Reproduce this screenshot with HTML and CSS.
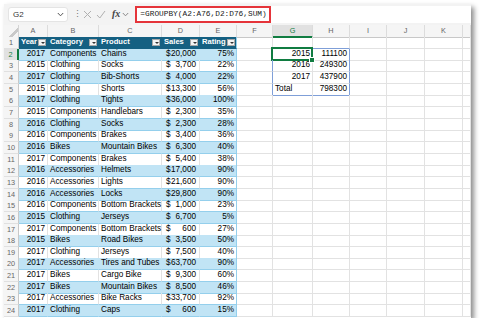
FILE: index.html
```html
<!DOCTYPE html>
<html>
<head>
<meta charset="utf-8">
<link rel="stylesheet" href="styles.css">
</head>
<body>
<div class="window">
  <div class="fbar">
    <div class="namebox"><span class="nb-text">G2</span><svg class="chev" width="7" height="5" viewBox="0 0 7 5"><path d="M0.8 1 L3.5 3.8 L6.2 1" fill="none" stroke="#555" stroke-width="1"/></svg></div>
    <span class="dots">⋮</span>
    <svg class="ico" width="9" height="9" viewBox="0 0 9 9"><path d="M1 1 L8 8 M8 1 L1 8" stroke="#b0b0b0" stroke-width="1"/></svg>
    <svg class="ico" width="10" height="9" viewBox="0 0 10 9"><path d="M1 5 L3.8 8 L9 1" fill="none" stroke="#b0b0b0" stroke-width="1"/></svg>
    <span class="fx">fx</span>
    <svg class="chev2" width="7" height="5" viewBox="0 0 7 5"><path d="M0.8 1 L3.5 3.8 L6.2 1" fill="none" stroke="#888" stroke-width="1"/></svg>
    <div class="finput"><span class="formula">=GROUPBY(A2:A76,D2:D76,SUM)</span></div>
  </div>
  <div class="sheet">
    <div class="r hdr"><div class="corner"></div><div class="ch">A</div><div class="ch">B</div><div class="ch">C</div><div class="ch">D</div><div class="ch">E</div><div class="ch">F</div><div class="ch csel">G</div><div class="ch">H</div><div class="ch">I</div><div class="ch">J</div><div class="ch">K</div><div class="ch"></div></div>

    <div class="r"><div class="h">1</div><div class="c th"><span>Year</span><i class="dd"></i></div><div class="c th"><span>Category</span><i class="dd"></i></div><div class="c th"><span>Product</span><i class="dd"></i></div><div class="c th"><span>Sales</span><i class="dd"></i></div><div class="c th te"><span>Rating</span><i class="dd"></i></div><div class="c"></div><div class="c spb"></div><div class="c spb"></div><div class="c"></div><div class="c"></div><div class="c"></div><div class="c"></div></div>

    <div class="r"><div class="h rsel">2</div><div class="c t b n">2017</div><div class="c t b">Components</div><div class="c t b">Chains</div><div class="c t b acct"><span>$</span><span>20,000</span></div><div class="c t b n te">75%</div><div class="c spr"></div><div class="c n sel">2015</div><div class="c n spr">111100</div><div class="c"></div><div class="c"></div><div class="c"></div><div class="c"></div></div>

    <div class="r"><div class="h">3</div><div class="c t n">2015</div><div class="c t">Clothing</div><div class="c t">Socks</div><div class="c t acct"><span>$</span><span>3,700</span></div><div class="c t n te">22%</div><div class="c spr"></div><div class="c n">2016</div><div class="c n spr">249300</div><div class="c"></div><div class="c"></div><div class="c"></div><div class="c"></div></div>

    <div class="r"><div class="h">4</div><div class="c t b n">2017</div><div class="c t b">Clothing</div><div class="c t b">Bib-Shorts</div><div class="c t b acct"><span>$</span><span>4,000</span></div><div class="c t b n te">22%</div><div class="c spr"></div><div class="c n">2017</div><div class="c n spr">437900</div><div class="c"></div><div class="c"></div><div class="c"></div><div class="c"></div></div>

    <div class="r"><div class="h">5</div><div class="c t n">2015</div><div class="c t">Clothing</div><div class="c t">Shorts</div><div class="c t acct"><span>$</span><span>13,300</span></div><div class="c t n te">56%</div><div class="c spr"></div><div class="c spb">Total</div><div class="c n spr spb">798300</div><div class="c"></div><div class="c"></div><div class="c"></div><div class="c"></div></div>

    <div class="r"><div class="h">6</div><div class="c t b n">2017</div><div class="c t b">Clothing</div><div class="c t b">Tights</div><div class="c t b acct"><span>$</span><span>36,000</span></div><div class="c t b n te">100%</div><div class="c"></div><div class="c"></div><div class="c"></div><div class="c"></div><div class="c"></div><div class="c"></div><div class="c"></div></div>

    <div class="r"><div class="h">7</div><div class="c t n">2015</div><div class="c t">Components</div><div class="c t">Handlebars</div><div class="c t acct"><span>$</span><span>2,300</span></div><div class="c t n te">35%</div><div class="c"></div><div class="c"></div><div class="c"></div><div class="c"></div><div class="c"></div><div class="c"></div><div class="c"></div></div>

    <div class="r"><div class="h">8</div><div class="c t b n">2016</div><div class="c t b">Clothing</div><div class="c t b">Socks</div><div class="c t b acct"><span>$</span><span>2,300</span></div><div class="c t b n te">28%</div><div class="c"></div><div class="c"></div><div class="c"></div><div class="c"></div><div class="c"></div><div class="c"></div><div class="c"></div></div>

    <div class="r"><div class="h">9</div><div class="c t n">2016</div><div class="c t">Components</div><div class="c t">Brakes</div><div class="c t acct"><span>$</span><span>3,400</span></div><div class="c t n te">36%</div><div class="c"></div><div class="c"></div><div class="c"></div><div class="c"></div><div class="c"></div><div class="c"></div><div class="c"></div></div>

    <div class="r"><div class="h">10</div><div class="c t b n">2016</div><div class="c t b">Bikes</div><div class="c t b">Mountain Bikes</div><div class="c t b acct"><span>$</span><span>6,300</span></div><div class="c t b n te">40%</div><div class="c"></div><div class="c"></div><div class="c"></div><div class="c"></div><div class="c"></div><div class="c"></div><div class="c"></div></div>

    <div class="r"><div class="h">11</div><div class="c t n">2017</div><div class="c t">Components</div><div class="c t">Brakes</div><div class="c t acct"><span>$</span><span>5,400</span></div><div class="c t n te">38%</div><div class="c"></div><div class="c"></div><div class="c"></div><div class="c"></div><div class="c"></div><div class="c"></div><div class="c"></div></div>

    <div class="r"><div class="h">12</div><div class="c t b n">2016</div><div class="c t b">Accessories</div><div class="c t b">Helmets</div><div class="c t b acct"><span>$</span><span>17,000</span></div><div class="c t b n te">90%</div><div class="c"></div><div class="c"></div><div class="c"></div><div class="c"></div><div class="c"></div><div class="c"></div><div class="c"></div></div>

    <div class="r"><div class="h">13</div><div class="c t n">2016</div><div class="c t">Accessories</div><div class="c t">Lights</div><div class="c t acct"><span>$</span><span>21,600</span></div><div class="c t n te">90%</div><div class="c"></div><div class="c"></div><div class="c"></div><div class="c"></div><div class="c"></div><div class="c"></div><div class="c"></div></div>

    <div class="r"><div class="h">14</div><div class="c t b n">2016</div><div class="c t b">Accessories</div><div class="c t b">Locks</div><div class="c t b acct"><span>$</span><span>29,800</span></div><div class="c t b n te">90%</div><div class="c"></div><div class="c"></div><div class="c"></div><div class="c"></div><div class="c"></div><div class="c"></div><div class="c"></div></div>

    <div class="r"><div class="h">15</div><div class="c t n">2016</div><div class="c t">Components</div><div class="c t">Bottom Brackets</div><div class="c t acct"><span>$</span><span>1,000</span></div><div class="c t n te">23%</div><div class="c"></div><div class="c"></div><div class="c"></div><div class="c"></div><div class="c"></div><div class="c"></div><div class="c"></div></div>

    <div class="r"><div class="h">16</div><div class="c t b n">2015</div><div class="c t b">Clothing</div><div class="c t b">Jerseys</div><div class="c t b acct"><span>$</span><span>6,700</span></div><div class="c t b n te">5%</div><div class="c"></div><div class="c"></div><div class="c"></div><div class="c"></div><div class="c"></div><div class="c"></div><div class="c"></div></div>

    <div class="r"><div class="h">17</div><div class="c t n">2017</div><div class="c t">Components</div><div class="c t">Bottom Brackets</div><div class="c t acct"><span>$</span><span>600</span></div><div class="c t n te">27%</div><div class="c"></div><div class="c"></div><div class="c"></div><div class="c"></div><div class="c"></div><div class="c"></div><div class="c"></div></div>

    <div class="r"><div class="h">18</div><div class="c t b n">2015</div><div class="c t b">Bikes</div><div class="c t b">Road Bikes</div><div class="c t b acct"><span>$</span><span>3,500</span></div><div class="c t b n te">50%</div><div class="c"></div><div class="c"></div><div class="c"></div><div class="c"></div><div class="c"></div><div class="c"></div><div class="c"></div></div>

    <div class="r"><div class="h">19</div><div class="c t n">2017</div><div class="c t">Clothing</div><div class="c t">Jerseys</div><div class="c t acct"><span>$</span><span>7,500</span></div><div class="c t n te">40%</div><div class="c"></div><div class="c"></div><div class="c"></div><div class="c"></div><div class="c"></div><div class="c"></div><div class="c"></div></div>

    <div class="r"><div class="h">20</div><div class="c t b n">2017</div><div class="c t b">Accessories</div><div class="c t b">Tires and Tubes</div><div class="c t b acct"><span>$</span><span>63,700</span></div><div class="c t b n te">90%</div><div class="c"></div><div class="c"></div><div class="c"></div><div class="c"></div><div class="c"></div><div class="c"></div><div class="c"></div></div>

    <div class="r"><div class="h">21</div><div class="c t n">2017</div><div class="c t">Bikes</div><div class="c t">Cargo Bike</div><div class="c t acct"><span>$</span><span>9,300</span></div><div class="c t n te">60%</div><div class="c"></div><div class="c"></div><div class="c"></div><div class="c"></div><div class="c"></div><div class="c"></div><div class="c"></div></div>

    <div class="r"><div class="h">22</div><div class="c t b n">2017</div><div class="c t b">Bikes</div><div class="c t b">Mountain Bikes</div><div class="c t b acct"><span>$</span><span>8,500</span></div><div class="c t b n te">46%</div><div class="c"></div><div class="c"></div><div class="c"></div><div class="c"></div><div class="c"></div><div class="c"></div><div class="c"></div></div>

    <div class="r"><div class="h">23</div><div class="c t n">2017</div><div class="c t">Accessories</div><div class="c t">Bike Racks</div><div class="c t acct"><span>$</span><span>33,700</span></div><div class="c t n te">92%</div><div class="c"></div><div class="c"></div><div class="c"></div><div class="c"></div><div class="c"></div><div class="c"></div><div class="c"></div></div>

    <div class="r"><div class="h">24</div><div class="c t b n">2017</div><div class="c t b">Clothing</div><div class="c t b">Caps</div><div class="c t b acct"><span>$</span><span>600</span></div><div class="c t b n te">15%</div><div class="c"></div><div class="c"></div><div class="c"></div><div class="c"></div><div class="c"></div><div class="c"></div><div class="c"></div></div>
  </div>
</div>
</body>
</html>
```
FILE: styles.css
```css
* { box-sizing: border-box; }
html, body { margin: 0; padding: 0; background: #fff; }

.window {
  margin: 4px 0 0 4px;
  width: 467px;
  height: 314px;
  overflow: hidden;
  background: #fff;
  box-shadow: 3px 3px 5px rgba(0,0,0,0.45);
  font-family: "Liberation Sans", Arial, sans-serif;
}

/* formula bar */
.fbar {
  height: 21px;
  background: #f3f3f3;
  display: flex;
  align-items: flex-start;
}
.namebox {
  margin: 3px 0 0 4px;
  width: 60px;
  height: 15px;
  background: #fff;
  border: 1px solid #e4e4e4;
  border-radius: 3px;
  display: flex;
  align-items: center;
  justify-content: space-between;
  padding: 0 3px 0 4px;
}
.nb-text { font-size: 8px; color: #333; }
.chev { display: block; }
.dots {
  margin: 5px 0 0 5px;
  font-size: 9px;
  line-height: 10px;
  color: #777;
  width: 6px;
}
.ico { display: block; margin: 6px 0 0 4px; }
.fx {
  margin: 3px 0 0 6px;
  font-family: "Liberation Serif", serif;
  font-style: italic;
  font-weight: bold;
  font-size: 10px;
  line-height: 14px;
  color: #444;
}
.chev2 { display: block; margin: 8px 0 0 2px; }
.finput {
  margin: 2px 0 0 6px;
  flex: 1;
  height: 17px;
  background: #fff;
  display: flex;
  align-items: stretch;
}
.formula {
  width: 136px;
  border: 2px solid #e5343a;
  font-family: "Liberation Mono", monospace;
  font-size: 7.8px;
  line-height: 13px;
  color: #222;
  padding-left: 3px;
  white-space: nowrap;
}

/* sheet */
.sheet { font-size: 8.2px; color: #000; }
.r {
  display: grid;
  grid-template-columns: 15px 29px 51px 63px 38px 37px 36px 40px 37px 37px 38px 38px 8px;
  height: 11.667px;
}
.r.hdr { height: 12px; }

.corner {
  background: #f5f5f5 linear-gradient(135deg, transparent 62%, #c9c9c9 62%, #c9c9c9 80%, transparent 80%);
  border-right: 1px solid #d4d4d4;
  border-bottom: 1px solid #c8c8c8;
}
.ch {
  background: #f5f5f5;
  color: #666;
  font-size: 7.3px;
  text-align: center;
  line-height: 11px;
  border-right: 1px solid #dcdcdc;
  border-bottom: 1px solid #c8c8c8;
}
.ch.csel {
  background: #e1e1e1;
  color: #107c41;
  border-bottom: 2px solid #107c41;
}
.h {
  background: #f5f5f5;
  color: #666;
  font-size: 7.3px;
  text-align: center;
  line-height: 11px;
  border-right: 1px solid #c8c8c8;
  border-bottom: 1px solid #e0e0e0;
}
.h.rsel {
  background: #e1e1e1;
  color: #107c41;
  border-right: 2px solid #107c41;
}

.c {
  position: relative;
  border-right: 1px solid #e2e2e2;
  border-bottom: 1px solid #e2e2e2;
  padding: 0 2px;
  line-height: 10.5px;
  white-space: nowrap;
  overflow: visible;
}
.n { text-align: right; }

.t { border-bottom-color: #94cfec; }
.t.b { background: #c1e4f5; border-right-color: #c1e4f5; }
.te { border-right-color: #94cfec; }
.t.b.te { border-right-color: #94cfec; }

.th {
  background: #156082;
  color: #fff;
  font-weight: bold;
  font-size: 7.6px;
  border-right-color: #156082;
  border-bottom-color: #156082;
  display: flex;
  align-items: center;
  justify-content: space-between;
  padding: 0 1px 0 2px;
}
.th.te { border-right-color: #94cfec; }
.dd {
  display: block;
  width: 8px;
  height: 7px;
  background: #f4f4f4;
  border: 1px solid #a8a8a8;
  position: relative;
  flex: none;
}
.dd::after {
  content: "";
  position: absolute;
  left: 1.5px;
  top: 2px;
  border-left: 2px solid transparent;
  border-right: 2px solid transparent;
  border-top: 2px solid #333;
}

.acct {
  display: flex;
  justify-content: space-between;
  padding: 0 3px 0 4px;
}

.spr { border-right-color: #7f9fd8; }
.spb { border-bottom-color: #7f9fd8; }

.sel::after {
  content: "";
  position: absolute;
  left: -2px;
  top: -2px;
  right: -1px;
  bottom: -1px;
  border: 2px solid #107c41;
}
.sel::before {
  content: "";
  position: absolute;
  right: -3px;
  bottom: -3px;
  width: 4px;
  height: 4px;
  background: #107c41;
  border: 1px solid #fff;
  z-index: 2;
}
```
